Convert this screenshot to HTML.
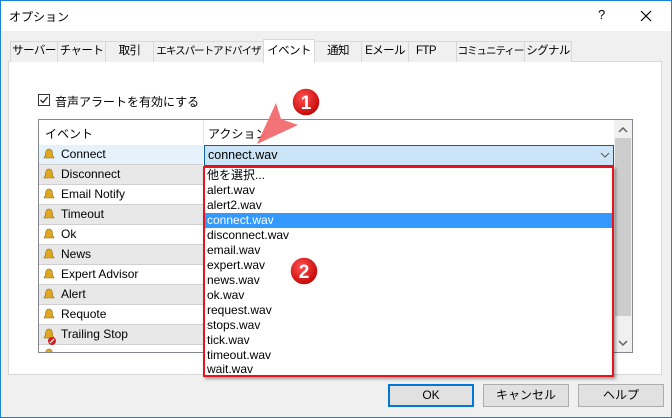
<!DOCTYPE html>
<html><head><meta charset="utf-8"><style>
*{margin:0;padding:0;box-sizing:border-box}
body{width:672px;height:418px;overflow:hidden;font-family:"Liberation Sans","Noto Sans CJK JP",sans-serif;font-size:12px;color:#000;background:#f0f0f0;position:relative}
.abs{position:absolute}
.win{left:0;top:0;width:672px;height:418px;border:1px solid #1883d7;}
.title{left:1px;top:1px;width:670px;height:30px;background:#fff}
.tab{top:41px;height:21px;border:1px solid #d9d9d9;border-bottom:none;background:#f0f0f0;text-align:center;line-height:19px;font-size:11.5px;white-space:nowrap;overflow:hidden;letter-spacing:-0.6px}
.panel{left:8px;top:61px;width:654px;height:314px;background:#fff;border:1px solid #d9d9d9}
.row{left:39px;width:164px;height:20px;border-bottom:1px solid #d0d0d0;line-height:19px;padding-left:22px}
.item{left:205px;width:407px;height:15px;line-height:15px;padding-left:2px;font-size:12px}
.btn{top:384px;width:86px;height:23px;background:#e1e1e1;border:1px solid #adadad;text-align:center;line-height:21px;white-space:nowrap}
</style></head><body>
<div class="abs win"></div>
<div class="abs title"></div>
<div class="abs" style="left:9px;top:8px;font-size:12px">オプション</div>
<div class="abs" style="left:598px;top:7px;font-size:13px">?</div>
<svg class="abs" style="left:640px;top:10px" width="12" height="12"><path d="M1 1L11 11M11 1L1 11" stroke="#000" stroke-width="1.2"/></svg>

<div class="abs panel"></div>
<div class="abs tab" style="left:10px;width:48px">サーバー</div>
<div class="abs tab" style="left:57px;width:49px">チャート</div>
<div class="abs tab" style="left:105px;width:49px">取引</div>
<div class="abs tab" style="left:153px;width:111px;font-size:10.5px;letter-spacing:-1px">エキスパートアドバイザ</div>
<div class="abs tab" style="left:263px;top:39px;height:24px;width:52px;background:#fff;line-height:22px">イベント</div>
<div class="abs tab" style="left:314px;width:48px">通知</div>
<div class="abs tab" style="left:361px;width:48px">Eメール</div>
<div class="abs tab" style="left:408px;width:49px;text-align:left;padding-left:7px">FTP</div>
<div class="abs tab" style="left:456px;width:69px;font-size:10.5px;letter-spacing:-1px">コミュニティー</div>
<div class="abs tab" style="left:524px;width:48px">シグナル</div>

<div class="abs" style="left:38px;top:94px;width:12px;height:12px;border:1px solid #333;background:#fff"></div>
<svg class="abs" style="left:39px;top:95px" width="10" height="10"><path d="M1.5 5L4 7.5L8.5 2" stroke="#222" stroke-width="1.3" fill="none"/></svg>
<div class="abs" style="left:55px;top:93px">音声アラートを有効にする</div>

<div class="abs" style="left:38px;top:119px;width:595px;height:234px;border:1px solid #828790;background:#fff;overflow:hidden"></div>
<div class="abs" style="left:203px;top:120px;width:1px;height:25px;background:#e5e5e5"></div>
<div class="abs" style="left:45px;top:125px">イベント</div>
<div class="abs" style="left:208px;top:125px">アクション</div>

<div class="abs row" style="top:145px;background:#e5f1fb">Connect</div>
<div class="abs row" style="top:165px;background:#e8e8e8">Disconnect</div>
<div class="abs row" style="top:185px">Email Notify</div>
<div class="abs row" style="top:205px;background:#e8e8e8">Timeout</div>
<div class="abs row" style="top:225px">Ok</div>
<div class="abs row" style="top:245px;background:#e8e8e8">News</div>
<div class="abs row" style="top:265px">Expert Advisor</div>
<div class="abs row" style="top:285px;background:#e8e8e8">Alert</div>
<div class="abs row" style="top:305px">Requote</div>
<div class="abs row" style="top:325px;background:#e8e8e8">Trailing Stop</div>
<svg class="abs" style="left:42px;top:147px" width="14" height="205">
<g fill="#e0a820" stroke="#8a6a10" stroke-width="0.6">
<path id="b" d="M7 2C4 2 3.5 5 3.5 8L2 11H12L10.5 8C10.5 5 10 2 7 2Z"/>
<use href="#b" y="20"/><use href="#b" y="40"/><use href="#b" y="60"/><use href="#b" y="80"/><use href="#b" y="100"/><use href="#b" y="120"/><use href="#b" y="140"/><use href="#b" y="160"/><use href="#b" y="180"/><use href="#b" y="200"/>
</g>
<circle cx="10" cy="194" r="4" fill="#d42020"/><path d="M8 196L12 192" stroke="#fff" stroke-width="1.2"/>
</svg>

<div class="abs" style="left:204px;top:145px;width:410px;height:21px;background:#cce4f7;border:1px solid #0a5ea8;line-height:19px;padding-left:3px;font-size:12.5px">connect.wav</div>
<svg class="abs" style="left:600px;top:152px" width="10" height="7"><path d="M1 1L5 5L9 1" stroke="#555" fill="none"/></svg>

<div class="abs" style="left:614px;top:120px;width:18px;height:232px;background:#f0f0f0"></div>
<div class="abs" style="left:615px;top:138px;width:16px;height:178px;background:#cdcdcd"></div>
<svg class="abs" style="left:618px;top:127px" width="10" height="7"><path d="M1 5L5 1L9 5" stroke="#606060" stroke-width="1.5" fill="none"/></svg>
<svg class="abs" style="left:618px;top:340px" width="10" height="7"><path d="M1 1L5 5L9 1" stroke="#606060" stroke-width="1.5" fill="none"/></svg>

<div class="abs" style="left:203px;top:166px;width:411px;height:211px;background:#fff;border:2px solid #e8141c;box-shadow:2px 2px 3px rgba(0,0,0,0.35)"></div>
<div class="abs item" style="top:168px">他を選択...</div>
<div class="abs item" style="top:183px">alert.wav</div>
<div class="abs item" style="top:198px">alert2.wav</div>
<div class="abs item" style="top:213px;background:#3399ff;color:#fff">connect.wav</div>
<div class="abs item" style="top:228px">disconnect.wav</div>
<div class="abs item" style="top:243px">email.wav</div>
<div class="abs item" style="top:258px">expert.wav</div>
<div class="abs item" style="top:273px">news.wav</div>
<div class="abs item" style="top:288px">ok.wav</div>
<div class="abs item" style="top:303px">request.wav</div>
<div class="abs item" style="top:318px">stops.wav</div>
<div class="abs item" style="top:333px">tick.wav</div>
<div class="abs item" style="top:348px">timeout.wav</div>
<div class="abs item" style="top:362px">wait.wav</div>

<svg class="abs" style="left:240px;top:80px" width="100" height="210">
<defs><radialGradient id="g" cx="40%" cy="35%" r="70%"><stop offset="0" stop-color="#ff5050"/><stop offset="1" stop-color="#c00000"/></radialGradient></defs>
<polygon points="17,64 36,23 41,39 58,45" fill="#f26a6e" opacity="0.95"/>
<circle cx="66" cy="22" r="14" fill="url(#g)" stroke="#fff" stroke-width="1.5"/>
<text x="66" y="29" text-anchor="middle" fill="#fff" font-size="19" font-weight="bold" font-family="Liberation Sans, sans-serif">1</text>
<circle cx="64" cy="191" r="14" fill="url(#g)" stroke="#fff" stroke-width="1.5"/>
<text x="64" y="198" text-anchor="middle" fill="#fff" font-size="19" font-weight="bold" font-family="Liberation Sans, sans-serif">2</text>
</svg>

<div class="abs btn" style="left:388px;border:2px solid #0078d7;line-height:19px">OK</div>
<div class="abs btn" style="left:483px">キャンセル</div>
<div class="abs btn" style="left:578px">ヘルプ</div>
</body></html>
